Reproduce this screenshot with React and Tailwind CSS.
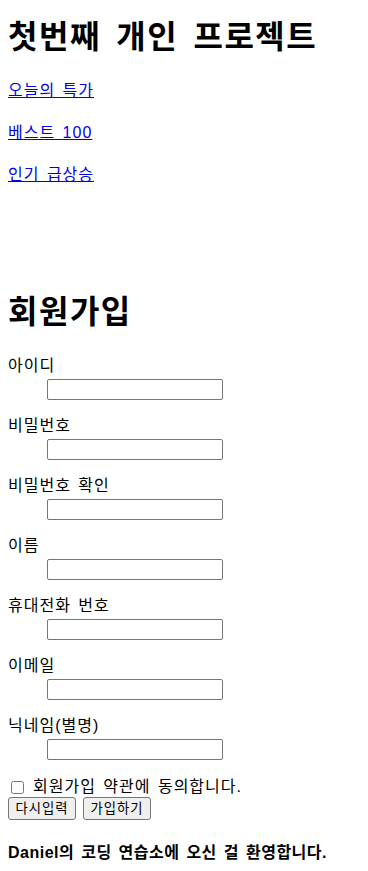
import React from "react";

const fields = ["아이디", "비밀번호", "비밀번호 확인", "이름", "휴대전화 번호", "이메일", "닉네임(별명)"];

export default function App() {
  return (
    <div
      className="min-h-screen bg-white px-2 text-[16px] tracking-[1px] [word-spacing:2px] text-black"
      style={{ fontFamily: '"Liberation Sans", "Noto Sans CJK KR", sans-serif' }}
    >
      <div className="h-4" />
      <h1 className="text-[32px] font-bold leading-[43px] tracking-[1.5px] [word-spacing:5px]">첫번째 개인 프로젝트</h1>

      <p className="mt-[21px] leading-[21px]">
        <a href="#" className="text-[#0000ee] underline">오늘의 특가</a>
      </p>
      <p className="mt-[21px] leading-[21px]">
        <a href="#" className="text-[#0000ee] underline">베스트 100</a>
      </p>
      <p className="mt-[21px] leading-[21px]">
        <a href="#" className="text-[#0000ee] underline">인기 급상승</a>
      </p>

      <h1 className="mt-[106px] text-[32px] font-bold leading-[43px] tracking-[1.5px]">회원가입</h1>

      <form className="mt-[21px]" onSubmit={(e) => e.preventDefault()}>
        {fields.map((label, i) => (
          <div key={label} className={i === 0 ? "" : "mt-[15px]"}>
            <label className="block leading-[21px]">{label}</label>
            <input
              type={label.startsWith("비밀번호") ? "password" : "text"}
              className="ml-[39px] mt-[3px] block h-[21px] w-[176px] rounded-[2px] border border-[#767676] bg-white px-[2px] text-[13px]"
            />
          </div>
        ))}

        <div className="mt-[17px] flex h-[20px] items-center leading-[20px] tracking-[1px]">
          <input type="checkbox" className="ml-[3px] mr-[9px] h-[13px] w-[13px]" />
          <span>회원가입 약관에 동의합니다.</span>
        </div>

        <div className="flex gap-[7px]">
          <button
            type="reset"
            className="h-[23px] w-[68px] rounded-[3px] border border-[#767676] bg-[#efefef] text-[13.33px] leading-[21px] tracking-[1px]"
          >
            다시입력
          </button>
          <button
            type="submit"
            className="h-[23px] w-[68px] rounded-[3px] border border-[#767676] bg-[#efefef] text-[13.33px] leading-[21px] tracking-[1px]"
          >
            가입하기
          </button>
        </div>
      </form>

      <p className="mt-[22px] font-bold leading-[21px] tracking-[0.5px]">Daniel의 코딩 연습소에 오신 걸 환영합니다.</p>
    </div>
  );
}
